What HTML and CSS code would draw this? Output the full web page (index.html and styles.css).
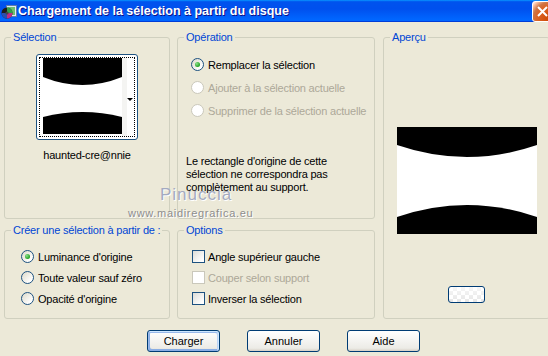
FILE: index.html
```html
<!DOCTYPE html>
<html lang="fr">
<head>
    <meta charset="UTF-8">
    <title>Chargement de la sélection à partir du disque</title>
    <link rel="stylesheet" href="styles.css">
</head>
<body>
    <div class="window">
        <div class="titlebar">
            <svg class="app-icon" width="16" height="16" viewBox="0 0 16 16">
                <rect x="5.5" y="1.5" width="10" height="11" fill="#dfe9f6" stroke="#5f7fa8"/>
                <rect x="7" y="3" width="7" height="8" fill="#6fc16f"/>
                <circle cx="6" cy="9" r="5.5" fill="#1c1c1c"/>
                <path d="M6 9 L6 3.5 A5.5 5.5 0 0 1 11.5 9 Z" fill="#2f9f4a"/>
                <path d="M6 9 L11.5 9 A5.5 5.5 0 0 1 6 14.5 Z" fill="#c02a84"/>
                <path d="M6 9 L6 14.5 A5.5 5.5 0 0 1 0.5 9 Z" fill="#2a4fb0"/>
                <circle cx="6" cy="9" r="1.6" fill="#444"/>
            </svg>
            <span class="title">Chargement de la sélection à partir du disque</span>
            <span class="close">
                <svg width="21" height="21" viewBox="0 0 21 21">
                    <path d="M6 6 L15 15 M15 6 L6 15" stroke="#fff" stroke-width="2"/>
                </svg>
            </span>
        </div>

        <div class="content">
            <div class="groups">
                <fieldset class="group g-selection">
                    <legend>Sélection</legend>
                    <div class="thumb">
                        <div class="thumb-focus">
                            <svg class="thumb-img" width="79" height="76" viewBox="0 0 79 76">
                                <rect width="79" height="76" fill="#fff"/>
                                <path d="M0 0 H79 V19 Q39.5 35 0 19 Z" fill="#000"/>
                                <path d="M0 76 H79 V59 Q39.5 49 0 59 Z" fill="#000"/>
                            </svg>
                            <span class="thumb-strip"></span>
                            <span class="thumb-arrow"></span>
                        </div>
                    </div>
                    <div class="thumb-name">haunted-cre@nnie</div>
                </fieldset>

                <fieldset class="group g-operation">
                    <legend>Opération</legend>
                    <div class="opt-list">
                        <label class="opt"><span class="radio checked"></span>Remplacer la sélection</label>
                        <label class="opt disabled"><span class="radio"></span>Ajouter à la sélection actuelle</label>
                        <label class="opt disabled"><span class="radio"></span>Supprimer de la sélection actuelle</label>
                    </div>
                    <p class="note">Le rectangle d'origine de cette<br>sélection ne correspondra pas<br>complètement au support.</p>
                </fieldset>

                <fieldset class="group g-preview">
                    <legend>Aperçu</legend>
                    <svg class="preview-img" width="140" height="107" viewBox="0 0 140 107">
                        <rect width="140" height="107" fill="#fff"/>
                        <path d="M0 0 H140 V18 Q70 42 0 18 Z" fill="#000"/>
                        <path d="M0 107 H140 V90 Q70 66 0 90 Z" fill="#000"/>
                    </svg>
                    <span class="bg-button"></span>
                </fieldset>

                <fieldset class="group g-source">
                    <legend>Créer une sélection à partir de :</legend>
                    <div class="opt-list small">
                        <label class="opt"><span class="radio checked"></span>Luminance d'origine</label>
                        <label class="opt"><span class="radio"></span>Toute valeur sauf zéro</label>
                        <label class="opt"><span class="radio"></span>Opacité d'origine</label>
                    </div>
                </fieldset>

                <fieldset class="group g-options">
                    <legend>Options</legend>
                    <div class="opt-list small">
                        <label class="opt"><span class="check"></span>Angle supérieur gauche</label>
                        <label class="opt disabled"><span class="check"></span>Couper selon support</label>
                        <label class="opt"><span class="check"></span>Inverser la sélection</label>
                    </div>
                </fieldset>
            </div>

            <div class="actions">
                <button class="btn btn-default">Charger</button>
                <button class="btn">Annuler</button>
                <button class="btn">Aide</button>
            </div>
        </div>

        <span class="wm-name">Pinuccia</span>
        <span class="wm-url">www.maidiregrafica.eu</span>
    </div>
</body>
</html>
```

FILE: styles.css
```css
* {
    margin: 0;
    padding: 0;
    box-sizing: border-box;
}

body {
    font-family: "Liberation Sans", Arial, sans-serif;
    font-size: 11px;
    letter-spacing: -0.2px;
    color: #000;
    background-color: #ece9d8;
}

.window {
    position: relative;
    width: 548px;
    height: 356px;
    overflow: hidden;
    background-color: #ece9d8;
}

/* barre de titre */
.titlebar {
    height: 22px;
    display: flex;
    align-items: center;
    background: linear-gradient(#0997ff 0, #0053ee 8%, #0050ee 40%, #0066ff 88%, #0066ff 93%, #005bff 95%, #003dd7 96%, #003dd7 100%);
    color: #fff;
}

.app-icon {
    margin-left: 1px;
    margin-top: 2px;
    flex-shrink: 0;
}

.title {
    margin-left: 1px;
    font-weight: bold;
    font-size: 12.5px;
    letter-spacing: 0;
    text-shadow: 1px 1px #0f1089;
    white-space: nowrap;
}

.close {
    margin-left: auto;
    margin-right: -5px;
    width: 21px;
    height: 21px;
    border: 1px solid #fff;
    border-radius: 3px;
    background: radial-gradient(circle at 90% 90%, #cc4600 0, #dc6527 55%, #cd7546 70%, #ffccb2 90%, #fff 100%);
    background-color: #e0542a;
    flex-shrink: 0;
}

.close svg {
    display: block;
    margin: -1px;
}

/* contenu */
.content {
    padding: 9px 0 0 4px;
}

.groups {
    display: grid;
    grid-template-columns: 166px 198px 168px;
    grid-template-rows: 188px 95px;
    column-gap: 7px;
    row-gap: 5px;
}

.group {
    border: 1px solid #d0d0bf;
    border-radius: 3px;
    padding: 0;
    margin: 0;
    min-width: 0;
}

.group legend {
    margin-left: 6px;
    padding: 0 2px;
    color: #0046d5;
    line-height: 13px;
    white-space: nowrap;
}

.g-selection { grid-column: 1; grid-row: 1; }
.g-operation { grid-column: 2; grid-row: 1; }
.g-preview { grid-column: 3; grid-row: 1 / 3; margin-left: 1px; }
.g-source { grid-column: 1; grid-row: 2; }
.g-options { grid-column: 2; grid-row: 2; }

/* vignette */
.thumb {
    width: 102px;
    height: 86px;
    margin: 10px auto 0;
    padding: 2px;
    border: 1px solid #1c5180;
    border-radius: 3px;
    background-color: #fff;
}

.thumb-focus {
    height: 100%;
    display: flex;
    padding-left: 3px;
    border: 1px dotted #000;
}

.thumb-img {
    display: block;
    flex-shrink: 0;
}

.thumb-strip {
    width: 7px;
    background-color: #f4f4f2;
}

.thumb-arrow {
    align-self: center;
    margin-left: auto;
    margin-right: 1px;
    margin-top: 4px;
    width: 0;
    height: 0;
    border-left: 3px solid transparent;
    border-right: 3px solid transparent;
    border-top: 3px solid #000;
}

.thumb-name {
    margin-top: 9px;
    text-align: center;
    line-height: 13px;
}

/* boutons radio et cases */
.opt-list {
    padding: 9px 0 0 13px;
}

.g-source .opt-list {
    padding-left: 16px;
}

.g-options .opt-list {
    padding-left: 14px;
}

.opt {
    display: flex;
    align-items: center;
    height: 23px;
    white-space: nowrap;
}

.opt-list.small .opt {
    height: 21px;
}

.radio {
    width: 13px;
    height: 13px;
    margin-right: 4px;
    border: 1px solid #1c5180;
    border-radius: 50%;
    background: linear-gradient(135deg, #dcd9c9, #fff 80%);
    display: flex;
    align-items: center;
    justify-content: center;
    flex-shrink: 0;
}

.radio.checked::after {
    content: "";
    width: 5px;
    height: 5px;
    border-radius: 50%;
    background: radial-gradient(circle at 35% 35%, #8be08b, #21a121 70%);
}

.check {
    width: 13px;
    height: 13px;
    margin-right: 3px;
    border: 1px solid #1c5180;
    background: linear-gradient(135deg, #dcdcd7, #fff 85%);
    flex-shrink: 0;
}

.opt.disabled {
    color: #aca899;
}

.opt.disabled .radio,
.opt.disabled .check {
    border-color: #cac8bb;
    background: #fff;
}

.note {
    margin-top: 33px;
    padding-left: 8px;
    line-height: 13px;
}

/* aperçu */
.g-preview {
    display: flex;
    flex-direction: column;
    align-items: center;
}

.preview-img {
    display: block;
    margin-top: 83px;
}

.bg-button {
    margin-top: 52px;
    width: 37px;
    height: 17px;
    border: 1px solid #003c74;
    border-radius: 3px;
    background-color: #fff;
    background-image: linear-gradient(rgba(255, 255, 255, 0.7), rgba(255, 255, 255, 0)),
        conic-gradient(#e6e6e6 25%, #fff 0 50%, #e6e6e6 0 75%, #fff 0);
    background-size: 100% 100%, 8px 8px;
}

/* boutons */
.actions {
    display: flex;
    gap: 27px;
    margin: 11px 0 0 143px;
}

.btn {
    width: 73px;
    height: 22px;
    border: 1px solid #003c74;
    border-radius: 3px;
    background: linear-gradient(#fff, #ecebe6 86%, #d6d0c5);
    font-family: inherit;
    font-size: 11px;
    color: #000;
}

.btn-default {
    box-shadow: inset -1px 1px #cee7ff, inset 1px 2px #98b8ea, inset -2px 2px #bcd4f6, inset 1px -1px #89ade4, inset 2px -2px #89ade4;
}

/* filigrane */
.wm-name,
.wm-url {
    position: absolute;
    pointer-events: none;
    text-shadow: 1px 1px 0 #fff;
}

.wm-name {
    left: 160px;
    top: 186px;
    font-size: 17px;
    line-height: 18px;
    letter-spacing: 1px;
    color: #a3aac0;
}

.wm-url {
    left: 128px;
    top: 207px;
    font-size: 11px;
    line-height: 13px;
    letter-spacing: 0.7px;
    color: #8d8d8d;
}
```
